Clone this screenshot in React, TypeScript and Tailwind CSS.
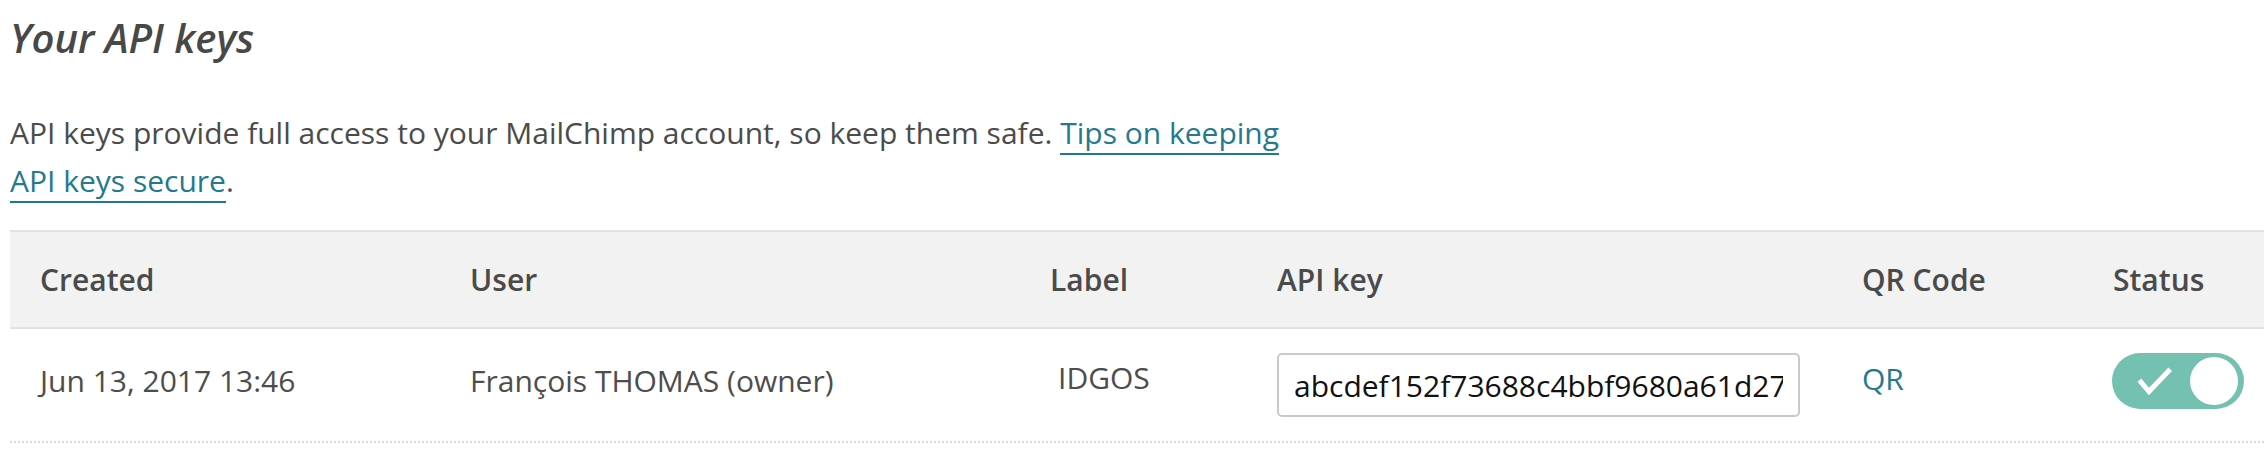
const COLUMNS = ["Created", "User", "Label", "API key", "QR Code", "Status"];

const API_KEYS = [
  {
    created: "Jun 13, 2017 13:46",
    user: "François THOMAS (owner)",
    label: "IDGOS",
    key: "abcdef152f73688c4bbf9680a61d27",
    enabled: true,
  },
];

function StatusToggle({ on }: { on: boolean }) {
  return (
    <div
      className={`relative h-[56px] w-[132px] rounded-full ${on ? "bg-[#74c1b1]" : "bg-[#d4d4d4]"}`}
    >
      {on && (
        <svg className="absolute left-0 top-0" width="132" height="56" viewBox="0 0 132 56">
          <polyline
            points="29,29 37,38.5 56.5,18"
            fill="none"
            stroke="#fff"
            strokeWidth="5"
            strokeLinecap="square"
          />
        </svg>
      )}
      <span className="absolute right-[6px] top-[3.5px] h-[48px] w-[48px] rounded-full bg-white" />
    </div>
  );
}

export default function App() {
  return (
    <div
      className="min-h-[472px] bg-white pl-[10px] text-[30px] text-[#4b4b4b]"
      style={{ fontFamily: '"Open Sans", "Noto Sans", sans-serif' }}
    >
      <h1 className="pt-[13px] text-[40px] font-semibold italic leading-[50px] text-[#484848]">
        Your API keys
      </h1>

      <p className="mt-[46px] max-w-[1295px] leading-[48px]">
        API keys provide full access to your MailChimp account, so keep them safe.{" "}
        <a href="#" className="border-b-2 border-[#1f7a8f] text-[#24798f]">
          Tips on keeping API keys secure
        </a>
        .
      </p>

      <div className="mt-[25px]">
        <div className="grid h-[99px] grid-cols-[430px_580px_227px_585px_251px_1fr] items-center border-y-2 border-[#e2e2e2] bg-[#f2f2f2] font-semibold text-[#4a4a4a]">
          {COLUMNS.map((col) => (
            <div key={col} className="pl-[30px]">
              {col}
            </div>
          ))}
        </div>

        {API_KEYS.map((row) => (
          <div
            key={row.key}
            className="grid h-[114px] grid-cols-[430px_580px_227px_585px_251px_1fr] items-start border-b-2 border-dotted border-[#dadada] text-[#4d4d4d]"
          >
            <div className="pl-[30px] pt-[29px]">{row.created}</div>
            <div className="pl-[30px] pt-[29px]">{row.user}</div>
            <div className="pl-[38px] pt-[26px]">{row.label}</div>
            <div className="pl-[30px] pt-[24px]">
              <input
                readOnly
                value={row.key}
                className="h-[64px] w-[523px] rounded-[5px] border-2 border-[#c9c9c9] bg-white px-[15px] text-[30px] text-[#111] outline-none"
              />
            </div>
            <div className="pl-[30px] pt-[27px]">
              <a href="#" className="text-[#24798f]">
                QR
              </a>
            </div>
            <div className="pl-[29px] pt-[24px]">
              <StatusToggle on={row.enabled} />
            </div>
          </div>
        ))}
      </div>
    </div>
  );
}
